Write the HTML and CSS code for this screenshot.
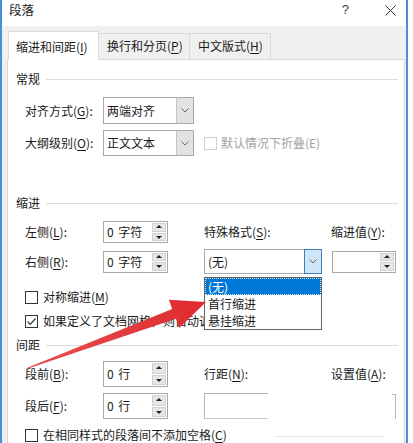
FILE: index.html
```html
<!DOCTYPE html>
<html lang="zh-CN">
<head>
<meta charset="utf-8">
<title>段落</title>
<link rel="stylesheet" href="styles.css">
</head>
<body>
<div class="window">
  <div class="titlebar">
    <span class="title">段落</span>
    <span class="help">?</span>
    <svg class="close" width="11" height="11" viewBox="0 0 11 11"><path d="M0.5 0.5L10.5 10.5M10.5 0.5L0.5 10.5" stroke="#333" stroke-width="1" fill="none"/></svg>
  </div>
  <div class="body">
    <div class="tabs">
      <div class="tab active t1">缩进和间距(<u>I</u>)</div>
      <div class="tab t2">换行和分页(<u>P</u>)</div>
      <div class="tab t3">中文版式(<u>H</u>)</div>
    </div>
    <div class="panel">
      <div class="section-head"><span>常规</span><i class="rule"></i></div>
      <div class="row r-gen1">
        <span class="lbl">对齐方式(<u>G</u>):</span>
        <div class="combo"><span class="ctext">两端对齐</span><span class="cbtn"><svg width="8" height="5" viewBox="0 0 8 5"><path d="M0.5 0.5L4 4L7.5 0.5" fill="none" stroke="#6a6a6a"/></svg></span></div>
      </div>
      <div class="row r-gen2">
        <span class="lbl">大纲级别(<u>O</u>):</span>
        <div class="combo c2"><span class="ctext">正文文本</span><span class="cbtn"><svg width="8" height="5" viewBox="0 0 8 5"><path d="M0.5 0.5L4 4L7.5 0.5" fill="none" stroke="#6a6a6a"/></svg></span></div>
        <div class="check disabled span2"><span class="box"></span><span>默认情况下折叠(E)</span></div>
      </div>

      <div class="section-head sh-indent"><span>缩进</span><i class="rule"></i></div>
      <div class="row r-ind1">
        <span class="lbl">左侧(<u>L</u>):</span>
        <div class="spin"><span>0&nbsp;字符</span><span class="sbtns"><i class="up"></i><i class="dn"></i></span></div>
        <span class="lbl">特殊格式(<u>S</u>):</span>
        <span class="lbl">缩进值(<u>Y</u>):</span>
      </div>
      <div class="row r-ind2">
        <span class="lbl">右侧(<u>R</u>):</span>
        <div class="spin"><span>0&nbsp;字符</span><span class="sbtns"><i class="up"></i><i class="dn"></i></span></div>
        <div class="combo special"><span class="ctext">(无)</span><span class="cbtn hot"><svg width="8" height="5" viewBox="0 0 8 5"><path d="M0.5 0.5L4 4L7.5 0.5" fill="none" stroke="#6a6a6a"/></svg></span></div>
        <div class="spin wide"><span></span><span class="sbtns"><i class="up"></i><i class="dn"></i></span></div>
      </div>
      <div class="check crow c-sym"><span class="box"></span><span>对称缩进(<u>M</u>)</span></div>
      <div class="check crow c-grid"><span class="box"><svg width="11" height="11" viewBox="0 0 11 11"><path d="M1.5 5.5L4.2 8.3L9.5 2.5" fill="none" stroke="#333" stroke-width="1.2"/></svg></span><span>如果定义了文档网格，则自动调整右缩进(<u>D</u>)</span></div>

      <div class="section-head sh-space"><span>间距</span><i class="rule"></i></div>
      <div class="row r-sp1">
        <span class="lbl">段前(<u>B</u>):</span>
        <div class="spin tall"><span>0&nbsp;行</span><span class="sbtns"><i class="up"></i><i class="dn"></i></span></div>
        <span class="lbl">行距(<u>N</u>):</span>
        <span class="lbl">设置值(<u>A</u>):</span>
      </div>
      <div class="row r-sp2">
        <span class="lbl">段后(<u>F</u>):</span>
        <div class="spin tall"><span>0&nbsp;行</span><span class="sbtns"><i class="up"></i><i class="dn"></i></span></div>
        <div class="ls-frag"></div>
        <div class="bracket"></div>
      </div>
      <div class="check crow c-nospace"><span class="box"></span><span>在相同样式的段落间不添加空格(<u>C</u>)</span><i class="faint"></i></div>
    </div>
  </div>
</div>

<div class="droplist">
  <div class="item sel">(无)</div>
  <div class="item">首行缩进</div>
  <div class="item">悬挂缩进</div>
</div>

<svg class="arrow" width="413" height="443" viewBox="0 0 413 443">
  <defs>
    <linearGradient id="ag" x1="28" y1="368" x2="206" y2="302" gradientUnits="userSpaceOnUse">
      <stop offset="0" stop-color="#e85050"/>
      <stop offset="1" stop-color="#de2a2e"/>
    </linearGradient>
  </defs>
  <polygon points="27.8,367.4 172.2,308.9 168.9,299.7 206,302 179.3,327.9 176,318.7 28.2,368.6" fill="url(#ag)"/>
</svg>
</body>
</html>
```

FILE: styles.css
```css
* { box-sizing: border-box; margin: 0; padding: 0; }

html, body { background: #fff; }

body {
  width: 413px;
  height: 443px;
  overflow: hidden;
  position: relative;
  font-family: "Noto Sans CJK SC", "Noto Sans", sans-serif;
  font-size: 12px;
  line-height: 16px;
  color: #1a1a1a;
}

u { text-decoration: underline; text-decoration-thickness: 1px; text-underline-offset: 2px; }

.window {
  width: 408px;
  height: 443px;
  border-left: 2px solid #4a8fd6;
  border-right: 2px solid #4a8fd6;
  background: #f0f0f0;
  display: flex;
  flex-direction: column;
}

/* title bar */
.titlebar {
  height: 28px;
  background: #fff;
  display: flex;
  align-items: flex-start;
  padding: 2px 10px 0 7px;
}
.title { font-size: 12.5px; flex: 1; }
.help {
  font-family: "Liberation Sans", sans-serif;
  font-size: 13px;
  line-height: 14px;
  color: #444;
  margin-top: 1px;
  margin-right: 36px;
}
.close { margin-top: 3px; }

/* body + tabs */
.body {
  flex: 1;
  padding: 5px 0 0 5px;
  display: flex;
  flex-direction: column;
}
.tabs {
  display: flex;
  align-items: flex-end;
  height: 28px;
  margin-left: 1px;
}
.tab {
  height: 26px;
  border: 1px solid #d9d9d9;
  border-bottom: none;
  background: #f0f0f0;
  padding: 4px 0 0 8px;
  margin-left: -1px;
  white-space: nowrap;
}
.tab.active {
  height: 29px;
  margin-bottom: -1px;
  margin-left: 0;
  background: #fff;
  padding: 7px 0 0 7px;
  position: relative;
  z-index: 1;
}
.t1 { width: 91px; }
.t2 { width: 92px; }
.t3 { width: 82px; }

.panel {
  width: 398px;
  flex: 1;
  background: #fff;
  border: 1px solid #d9d9d9;
  border-bottom: none;
}

/* section heads */
.section-head {
  display: flex;
  align-items: center;
  gap: 6px;
  height: 16px;
  margin-top: 11px;
  padding-left: 8px;
  padding-right: 6px;
}
.section-head .rule { flex: 1; height: 1px; background: #dcdcdc; }
.sh-indent { margin-top: 39px; }
.sh-space { margin-top: 8px; }

/* form rows */
.row {
  display: grid;
  grid-template-columns: 78px 101px 127px auto;
  align-items: center;
  padding-left: 17px;
}
.r-gen1 { margin-top: 10px; height: 27px; }
.r-gen2 { margin-top: 6px; height: 26px; }
.r-ind1 { margin-top: 10px; height: 22px; }
.r-ind2 { margin-top: 6px; height: 25px; }
.r-sp1 { margin-top: 8px; height: 26px; }
.r-sp2 { margin-top: 6px; height: 26px; }

.lbl { white-space: nowrap; }

/* combo box */
.combo {
  width: 91px;
  height: 27px;
  border: 1px solid #a8a8a8;
  background: #fff;
  display: flex;
  justify-content: space-between;
}
.combo.c2 { height: 26px; }
.ctext { padding: 0 0 0 3px; align-self: center; }
.cbtn {
  width: 17px;
  background: #e2e2e2;
  border-left: 1px solid #c4c4c4;
  display: flex;
  align-items: center;
  justify-content: center;
}
.combo.special { width: 118px; height: 25px; }
.cbtn.hot {
  background: #cfe5f8;
  border: 1px solid #3f7fba;
  margin: -1px -1px -1px 0;
  width: 18px;
}

/* spinner */
.spin {
  width: 65px;
  height: 22px;
  border: 1px solid #a8a8a8;
  background: #fff;
  display: flex;
  justify-content: space-between;
  align-items: center;
  padding-left: 3px;
  word-spacing: 2px;
}
.spin.wide { width: 64px; margin-left: 1px; }
.spin.tall { height: 26px; }
.sbtns {
  width: 15px;
  height: 100%;
  padding: 1px 1px 1px 0;
  display: flex;
  flex-direction: column;
  gap: 1px;
}
.sbtns i {
  flex: 1;
  background: #e6e6e6;
  border: 1px solid #d2d2d2;
  position: relative;
}
.sbtns i::after {
  content: "";
  position: absolute;
  left: 50%;
  top: 50%;
  margin-left: -3px;
  border-left: 3px solid transparent;
  border-right: 3px solid transparent;
}
.sbtns .up::after { border-bottom: 3px solid #222; margin-top: -2px; }
.sbtns .dn::after { border-top: 3px solid #222; margin-top: -1px; }

/* checkboxes */
.check {
  display: flex;
  align-items: center;
  gap: 5px;
  white-space: nowrap;
}
.check .box {
  width: 13px;
  height: 13px;
  border: 1px solid #333;
  background: #fff;
  display: flex;
  align-items: center;
  justify-content: center;
  flex: none;
}
.check.disabled { color: #a3a3a3; gap: 4px; }
.check.disabled .box { border-color: #cfcfcf; }
.span2 { grid-column: 3 / span 2; }

.crow { height: 16px; padding-left: 25px; margin-left: -8px; }
.c-sym { margin-top: 15px; }
.c-grid { margin-top: 8px; }
.c-nospace { margin-top: 8px; }

.faint {
  width: 108px;
  height: 1px;
  background: #e4e4e4;
  margin-left: auto;
  margin-right: 20px;
  margin-top: 2px;
}

/* line spacing fragment (partly hidden in the screenshot) */
.ls-frag {
  width: 64px;
  height: 26px;
  border-left: 1px solid #b4b4b4;
  border-top: 1px solid #b4b4b4;
  border-bottom: 1px solid #c8c8c8;
}
.bracket {
  width: 4px;
  height: 25px;
  margin-left: 61px;
  border-top: 1px solid #b8b8b8;
  border-right: 1px solid #b8b8b8;
}

/* open dropdown list */
.droplist {
  position: absolute;
  left: 204px;
  top: 277px;
  width: 118px;
  height: 53px;
  background: #fff;
  border: 1px solid #646464;
  z-index: 5;
}
.item {
  height: 17px;
  line-height: 15px;
  padding-left: 2px;
  border: 1px solid transparent;
  white-space: nowrap;
}
.item.sel {
  background: #0078d7;
  color: #fff;
  border: 1px dotted #cfe3f5;
}

.arrow {
  position: absolute;
  left: 0;
  top: 0;
  z-index: 6;
  pointer-events: none;
}
```
